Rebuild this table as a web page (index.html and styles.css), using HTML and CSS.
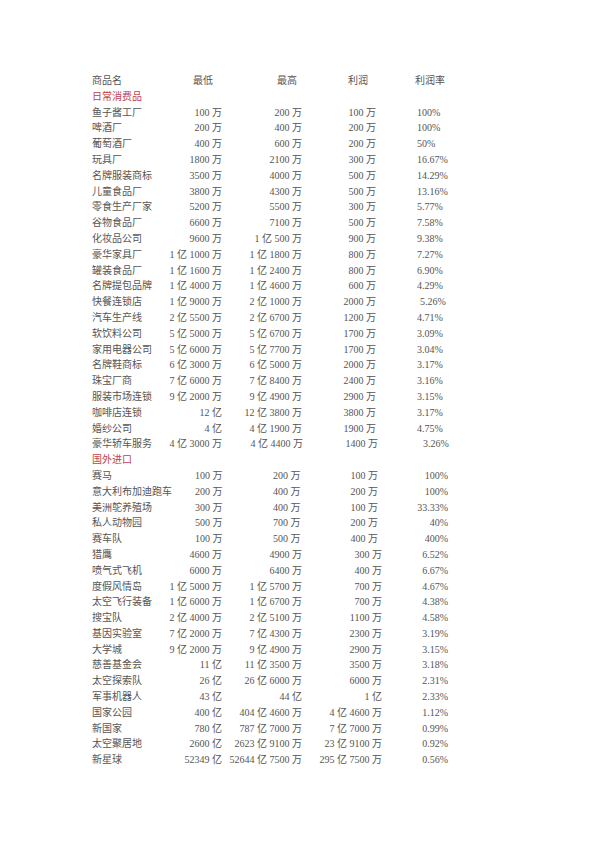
FILE: index.html
```html
<!DOCTYPE html>
<html lang="zh">
<head>
<meta charset="utf-8">
<title>商品利润表</title>
<link rel="stylesheet" href="styles.css">
</head>
<body>
<div class="sheet">
  <div class="row head">
    <span class="c-name">商品名</span>
    <span class="c-lo">最低</span>
    <span class="c-hi">最高</span>
    <span class="c-pr">利润</span>
    <span class="c-rt">利润率</span>
  </div>
  <div class="cat">日常消费品</div>
  <div class="row s1"><span class="c-name">鱼子酱工厂</span><span class="c-lo">100 万</span><span class="c-hi">200 万</span><span class="c-pr">100 万</span><span class="c-rt">100%</span></div>
  <div class="row s1"><span class="c-name">啤酒厂</span><span class="c-lo">200 万</span><span class="c-hi">400 万</span><span class="c-pr">200 万</span><span class="c-rt">100%</span></div>
  <div class="row s1"><span class="c-name">葡萄酒厂</span><span class="c-lo">400 万</span><span class="c-hi">600 万</span><span class="c-pr">200 万</span><span class="c-rt">50%</span></div>
  <div class="row s1"><span class="c-name">玩具厂</span><span class="c-lo">1800 万</span><span class="c-hi">2100 万</span><span class="c-pr">300 万</span><span class="c-rt">16.67%</span></div>
  <div class="row s1"><span class="c-name">名牌服装商标</span><span class="c-lo">3500 万</span><span class="c-hi">4000 万</span><span class="c-pr">500 万</span><span class="c-rt">14.29%</span></div>
  <div class="row s1"><span class="c-name">儿童食品厂</span><span class="c-lo">3800 万</span><span class="c-hi">4300 万</span><span class="c-pr">500 万</span><span class="c-rt">13.16%</span></div>
  <div class="row s1"><span class="c-name">零食生产厂家</span><span class="c-lo">5200 万</span><span class="c-hi">5500 万</span><span class="c-pr">300 万</span><span class="c-rt">5.77%</span></div>
  <div class="row s1"><span class="c-name">谷物食品厂</span><span class="c-lo">6600 万</span><span class="c-hi">7100 万</span><span class="c-pr">500 万</span><span class="c-rt">7.58%</span></div>
  <div class="row s1"><span class="c-name">化妆品公司</span><span class="c-lo">9600 万</span><span class="c-hi">1 亿 500 万</span><span class="c-pr">900 万</span><span class="c-rt">9.38%</span></div>
  <div class="row s1"><span class="c-name">豪华家具厂</span><span class="c-lo">1 亿 1000 万</span><span class="c-hi">1 亿 1800 万</span><span class="c-pr">800 万</span><span class="c-rt">7.27%</span></div>
  <div class="row s1"><span class="c-name">罐装食品厂</span><span class="c-lo">1 亿 1600 万</span><span class="c-hi">1 亿 2400 万</span><span class="c-pr">800 万</span><span class="c-rt">6.90%</span></div>
  <div class="row s1"><span class="c-name">名牌提包品牌</span><span class="c-lo">1 亿 4000 万</span><span class="c-hi">1 亿 4600 万</span><span class="c-pr">600 万</span><span class="c-rt">4.29%</span></div>
  <div class="row s1"><span class="c-name">快餐连锁店</span><span class="c-lo">1 亿 9000 万</span><span class="c-hi">2 亿 1000 万</span><span class="c-pr">2000 万</span><span class="c-rt shift1">5.26%</span></div>
  <div class="row s1"><span class="c-name">汽车生产线</span><span class="c-lo">2 亿 5500 万</span><span class="c-hi">2 亿 6700 万</span><span class="c-pr">1200 万</span><span class="c-rt">4.71%</span></div>
  <div class="row s1"><span class="c-name">软饮料公司</span><span class="c-lo">5 亿 5000 万</span><span class="c-hi">5 亿 6700 万</span><span class="c-pr">1700 万</span><span class="c-rt">3.09%</span></div>
  <div class="row s1"><span class="c-name">家用电器公司</span><span class="c-lo">5 亿 6000 万</span><span class="c-hi">5 亿 7700 万</span><span class="c-pr">1700 万</span><span class="c-rt">3.04%</span></div>
  <div class="row s1"><span class="c-name">名牌鞋商标</span><span class="c-lo">6 亿 3000 万</span><span class="c-hi">6 亿 5000 万</span><span class="c-pr">2000 万</span><span class="c-rt">3.17%</span></div>
  <div class="row s1"><span class="c-name">珠宝厂商</span><span class="c-lo">7 亿 6000 万</span><span class="c-hi">7 亿 8400 万</span><span class="c-pr">2400 万</span><span class="c-rt">3.16%</span></div>
  <div class="row s1"><span class="c-name">服装市场连锁</span><span class="c-lo">9 亿 2000 万</span><span class="c-hi">9 亿 4900 万</span><span class="c-pr">2900 万</span><span class="c-rt">3.15%</span></div>
  <div class="row s1"><span class="c-name">咖啡店连锁</span><span class="c-lo">12 亿</span><span class="c-hi">12 亿 3800 万</span><span class="c-pr">3800 万</span><span class="c-rt">3.17%</span></div>
  <div class="row s1"><span class="c-name">婚纱公司</span><span class="c-lo">4 亿</span><span class="c-hi">4 亿 1900 万</span><span class="c-pr">1900 万</span><span class="c-rt">4.75%</span></div>
  <div class="row s1"><span class="c-name">豪华轿车服务</span><span class="c-lo">4 亿 3000 万</span><span class="c-hi shift2">4 亿 4400 万</span><span class="c-pr shift3">1400 万</span><span class="c-rt shift4">3.26%</span></div>
  <div class="cat">国外进口</div>
  <div class="row s2"><span class="c-name">赛马</span><span class="c-lo lft">100 万</span><span class="c-hi lft">200 万</span><span class="c-pr early">100 万</span><span class="c-rt">100%</span></div>
  <div class="row s2"><span class="c-name">意大利布加迪跑车</span><span class="c-lo lft">200 万</span><span class="c-hi lft">400 万</span><span class="c-pr early">200 万</span><span class="c-rt">100%</span></div>
  <div class="row s2"><span class="c-name">美洲鸵养殖场</span><span class="c-lo lft">300 万</span><span class="c-hi lft">400 万</span><span class="c-pr early">100 万</span><span class="c-rt">33.33%</span></div>
  <div class="row s2"><span class="c-name">私人动物园</span><span class="c-lo lft">500 万</span><span class="c-hi lft">700 万</span><span class="c-pr early">200 万</span><span class="c-rt">40%</span></div>
  <div class="row s2"><span class="c-name">赛车队</span><span class="c-lo lft">100 万</span><span class="c-hi lft">500 万</span><span class="c-pr early">400 万</span><span class="c-rt">400%</span></div>
  <div class="row s2"><span class="c-name">猎鹰</span><span class="c-lo">4600 万</span><span class="c-hi">4900 万</span><span class="c-pr">300 万</span><span class="c-rt">6.52%</span></div>
  <div class="row s2"><span class="c-name">喷气式飞机</span><span class="c-lo">6000 万</span><span class="c-hi">6400 万</span><span class="c-pr">400 万</span><span class="c-rt">6.67%</span></div>
  <div class="row s2"><span class="c-name">度假风情岛</span><span class="c-lo">1 亿 5000 万</span><span class="c-hi">1 亿 5700 万</span><span class="c-pr">700 万</span><span class="c-rt">4.67%</span></div>
  <div class="row s2"><span class="c-name">太空飞行装备</span><span class="c-lo">1 亿 6000 万</span><span class="c-hi">1 亿 6700 万</span><span class="c-pr">700 万</span><span class="c-rt">4.38%</span></div>
  <div class="row s2"><span class="c-name">搜宝队</span><span class="c-lo">2 亿 4000 万</span><span class="c-hi">2 亿 5100 万</span><span class="c-pr">1100 万</span><span class="c-rt">4.58%</span></div>
  <div class="row s2"><span class="c-name">基因实验室</span><span class="c-lo">7 亿 2000 万</span><span class="c-hi">7 亿 4300 万</span><span class="c-pr">2300 万</span><span class="c-rt">3.19%</span></div>
  <div class="row s2"><span class="c-name">大学城</span><span class="c-lo">9 亿 2000 万</span><span class="c-hi">9 亿 4900 万</span><span class="c-pr">2900 万</span><span class="c-rt">3.15%</span></div>
  <div class="row s2"><span class="c-name">慈善基金会</span><span class="c-lo">11 亿</span><span class="c-hi">11 亿 3500 万</span><span class="c-pr">3500 万</span><span class="c-rt">3.18%</span></div>
  <div class="row s2"><span class="c-name">太空探索队</span><span class="c-lo">26 亿</span><span class="c-hi">26 亿 6000 万</span><span class="c-pr">6000 万</span><span class="c-rt">2.31%</span></div>
  <div class="row s2"><span class="c-name">军事机器人</span><span class="c-lo">43 亿</span><span class="c-hi">44 亿</span><span class="c-pr">1 亿</span><span class="c-rt">2.33%</span></div>
  <div class="row s2"><span class="c-name">国家公园</span><span class="c-lo">400 亿</span><span class="c-hi">404 亿 4600 万</span><span class="c-pr">4 亿 4600 万</span><span class="c-rt">1.12%</span></div>
  <div class="row s2"><span class="c-name">新国家</span><span class="c-lo">780 亿</span><span class="c-hi">787 亿 7000 万</span><span class="c-pr">7 亿 7000 万</span><span class="c-rt">0.99%</span></div>
  <div class="row s2"><span class="c-name">太空聚居地</span><span class="c-lo">2600 亿</span><span class="c-hi">2623 亿 9100 万</span><span class="c-pr">23 亿 9100 万</span><span class="c-rt">0.92%</span></div>
  <div class="row s2"><span class="c-name">新星球</span><span class="c-lo">52349 亿</span><span class="c-hi">52644 亿 7500 万</span><span class="c-pr">295 亿 7500 万</span><span class="c-rt">0.56%</span></div>
</div>
</body>
</html>
```

FILE: styles.css
```css
html, body {
  margin: 0;
  padding: 0;
  background: #ffffff;
}

.sheet {
  padding: 73px 0 0 92px;
  font-family: "Liberation Serif", "Noto Sans CJK SC", serif;
  font-size: 10px;
  line-height: 15.8px;
  color: #555555;
}

.row {
  display: grid;
  grid-template-columns: 68px 62px 80px 78px 68px;
  white-space: nowrap;
}

.row > span {
  min-width: 0;
}

.c-lo, .c-hi, .c-pr {
  text-align: right;
}

.cat {
  color: #c0404e;
}

/* header */
.head .c-lo { padding-right: 9px; }
.head .c-hi { padding-right: 5px; }
.head .c-pr { padding-right: 12px; }
.head .c-rt { padding-left: 35px; }

/* section 1: rate left aligned */
.s1 .c-pr { padding-right: 4px; }
.s1 .c-rt { padding-left: 37px; }
.s1 .shift1 { padding-left: 40px; }
.s1 .shift2 { margin-right: -1px; }
.s1 .c-pr.shift3 { padding-right: 2px; }
.s1 .shift4 { padding-left: 43px; }

/* section 2: rate right aligned */
.s2 .c-rt { text-align: right; }
.s2 .c-pr { margin-right: -2px; }
.s2 .c-pr.early { margin-right: 0; padding-right: 2px; }

/* left-aligned simple values in first rows of section 2 */
.s2 .c-lo.lft { text-align: left; padding-left: 35px; }
.s2 .c-hi.lft { text-align: left; padding-left: 51px; }
```
